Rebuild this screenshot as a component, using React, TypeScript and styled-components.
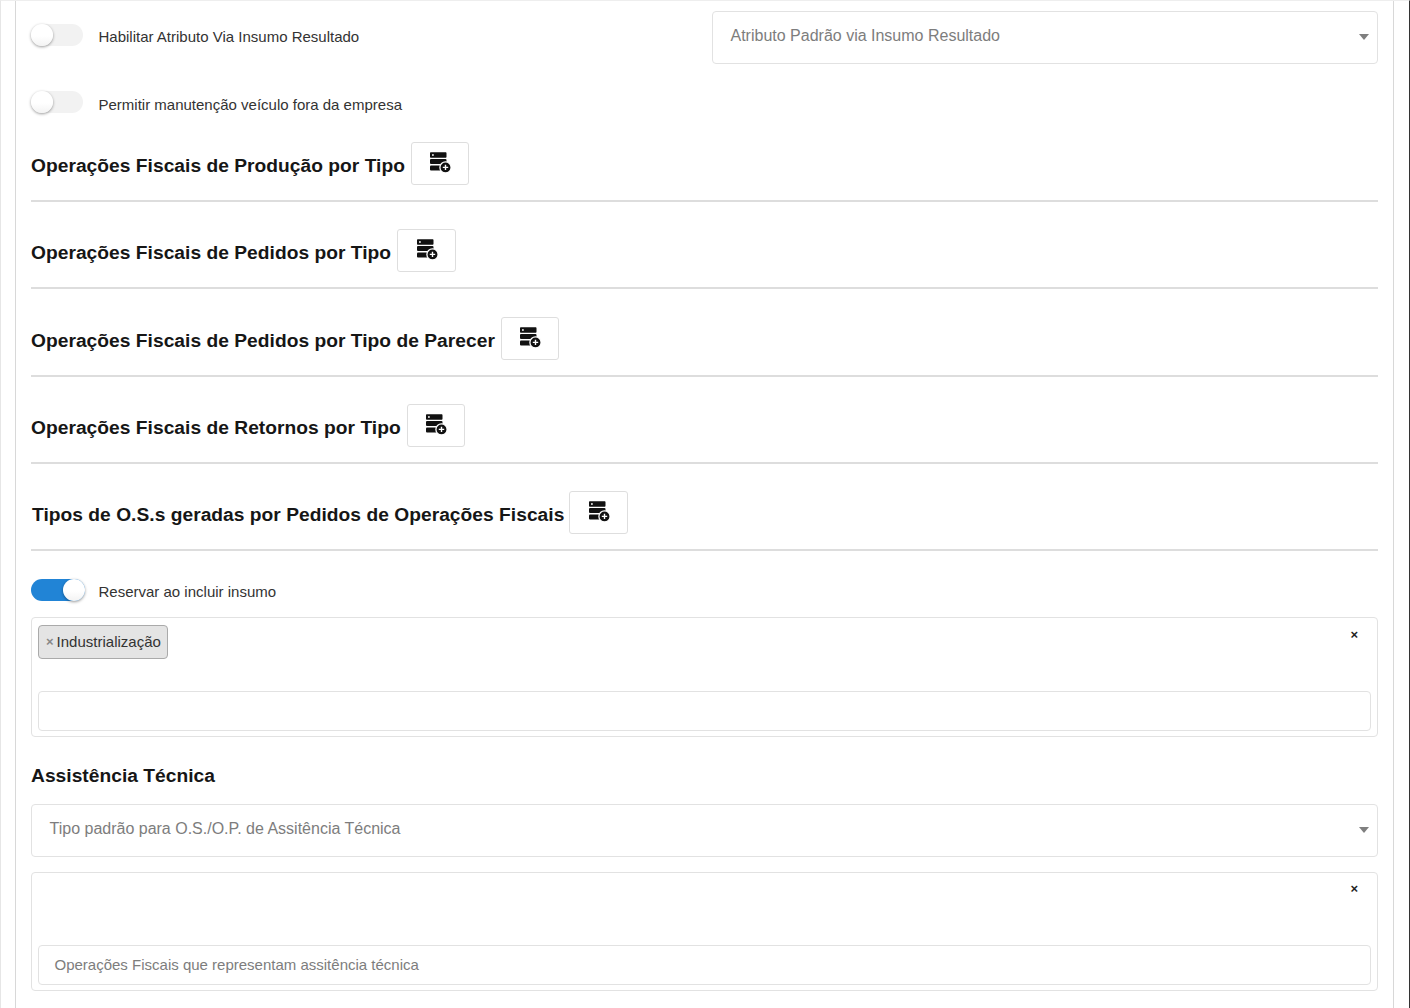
import React from "react";
import styled, { createGlobalStyle } from "styled-components";

const Global = createGlobalStyle`
  html, body { margin: 0; padding: 0; background: #fff; overflow: hidden; }
  body { font-family: "Liberation Sans", Arial, sans-serif; color: #212529; }
`;

const Viewport = styled.div`
  width: 1410px;
  height: 1008px;
  box-sizing: border-box;
  overflow: hidden;
  border-top: 1px solid #eeeeee;
  border-left: 1px solid #e6e6e6;
  border-right: 1px solid #333;
  padding: 0 15px 0 14px;
`;

const Card = styled.div`
  height: 100%;
  box-sizing: border-box;
  border-left: 1px solid #d8d8d8;
  border-right: 1px solid #d8d8d8;
  padding: 10px 15px 0 15px;
`;

const TopRow = styled.div`
  display: grid;
  grid-template-columns: 681px 1fr;
  align-items: start;
`;

const ToggleRow = styled.div<{ $top: number }>`
  display: flex;
  align-items: flex-start;
  height: 26px;
  margin-top: ${(p) => p.$top}px;
`;

const Track = styled.span<{ $on?: boolean }>`
  position: relative;
  display: block;
  flex: none;
  width: ${(p) => (p.$on ? 54 : 52)}px;
  height: 22px;
  border-radius: 11px;
  background: ${(p) => (p.$on ? "#2184d6" : "#f2f2f2")};
`;

const Knob = styled.span<{ $on?: boolean }>`
  position: absolute;
  top: 0;
  ${(p) => (p.$on ? "right: 0;" : "left: 0;")}
  width: 22px;
  height: 22px;
  border-radius: 50%;
  background: linear-gradient(#fff 55%, #f3f3f3);
  box-shadow: 0 1px 3px rgba(0, 0, 0, 0.4);
`;

const ToggleLabel = styled.span<{ $gap: number; $drop?: number }>`
  margin-left: ${(p) => p.$gap}px;
  padding-top: ${(p) => p.$drop ?? 0}px;
  font-size: 15px;
  line-height: 26px;
  color: #333;
  white-space: nowrap;
`;

const SelectBox = styled.div`
  position: relative;
  box-sizing: border-box;
  height: 53px;
  border: 1px solid #e2e2e2;
  border-radius: 4px;
  padding: 14px 17.5px 0;
  font-size: 16px;
  line-height: 20px;
  color: #7d7d7d;
`;

const Caret = styled.span`
  position: absolute;
  right: 8px;
  top: 22px;
  width: 0;
  height: 0;
  border-left: 5px solid transparent;
  border-right: 5px solid transparent;
  border-top: 6px solid #7f7f7f;
`;

const HeadingRow = styled.div<{ $top: number; $gap?: number }>`
  display: flex;
  align-items: center;
  gap: ${(p) => p.$gap ?? 6}px;
  height: 43px;
  margin-top: ${(p) => p.$top}px;
`;

const Heading = styled.h3<{ $inset?: boolean }>`
  margin: 0;
  padding: 5px 0 0 ${(p) => (p.$inset ? 1 : 0)}px;
  font-size: 19.2px;
  line-height: 24px;
  font-weight: 700;
  letter-spacing: 0.03px;
  color: #161616;
  white-space: nowrap;
`;

const IconButton = styled.button<{ $wide?: boolean }>`
  display: flex;
  align-items: flex-start;
  justify-content: center;
  box-sizing: border-box;
  width: ${(p) => (p.$wide ? 59 : 58)}px;
  height: 43px;
  padding: 9px 0 0;
  border: 1px solid #dedede;
  border-radius: 3px;
  background: #fff;
`;

const Divider = styled.hr`
  height: 2px;
  border: 0;
  background: #dddddd;
  margin: 15px 0 0;
`;

const SectionTitle = styled.h3`
  margin: 27px 0 0;
  font-size: 19.2px;
  line-height: 24px;
  font-weight: 700;
  letter-spacing: 0.03px;
  color: #161616;
`;

const MultiBox = styled.div<{ $top: number; $height: number }>`
  position: relative;
  box-sizing: border-box;
  height: ${(p) => p.$height}px;
  margin-top: ${(p) => p.$top}px;
  border: 1px solid #e2e2e2;
  border-radius: 4px;
  padding: 7px 6px 0;
`;

const ChipArea = styled.div<{ $height: number }>`
  height: ${(p) => p.$height}px;
`;

const Chip = styled.span`
  display: inline-flex;
  align-items: center;
  box-sizing: border-box;
  height: 34px;
  padding: 0 6px 2px 7px;
  border: 1px solid #aaa;
  border-radius: 4px;
  background: #e4e4e4;
  font-size: 15px;
  color: #333;
`;

const ChipX = styled.span`
  margin-right: 3px;
  color: #888;
  font-size: 13px;
  font-weight: 700;
`;

const Clear = styled.span<{ $top: number }>`
  position: absolute;
  top: ${(p) => p.$top}px;
  right: 19px;
  font-size: 13px;
  line-height: 16px;
  font-weight: 700;
  color: #222;
`;

const SearchInput = styled.div`
  box-sizing: border-box;
  height: 40px;
  border: 1px solid #e2e2e2;
  border-radius: 4px;
  padding: 0 15.5px;
  font-size: 15px;
  line-height: 38px;
  color: #7d7d7d;
`;

const WideSelect = styled(SelectBox)`
  margin-top: 16px;
`;

const DbPlus = () => (
  <svg width="22" height="22" viewBox="0 0 22 22" aria-hidden="true">
    <path fill="#111" fillRule="evenodd" d="M2 .3h14.500c.6 0 1 .4 1 1v3.400c0 .6-.4 1-1 1H2c-.6 0-1-.4-1-1V1.300c0-.6.4-1 1-1zM3 2.200v1.600h1.800V2.200H3z" />
    <rect x="1" y="7" width="16.500" height="5" rx="1" fill="#111" />
    <rect x="1" y="13.500" width="16.500" height="5" rx="1" fill="#111" />
    <circle cx="16.500" cy="15.400" r="5.600" fill="#111" stroke="#fff" strokeWidth="1.300" />
    <path fill="#fff" d="M15.800 12.700h1.400v2h2v1.400h-2v2h-1.400v-2h-2v-1.400h2z" />
  </svg>
);

const Toggle = ({ on, label, gap, drop }: { on?: boolean; label: string; gap: number; drop?: number }) => (
  <>
    <Track $on={on}><Knob $on={on} /></Track>
    <ToggleLabel $gap={gap} $drop={drop}>{label}</ToggleLabel>
  </>
);

const sections = [
  { title: "Operações Fiscais de Pedidos por Tipo", top: 27, wide: true },
  { title: "Operações Fiscais de Pedidos por Tipo de Parecer", top: 28 },
  { title: "Operações Fiscais de Retornos por Tipo", top: 27 },
  { title: "Tipos de O.S.s geradas por Pedidos de Operações Fiscais", top: 27, inset: true, gap: 5, wide: true },
];

export default function App() {
  return (
    <Viewport>
      <Global />
      <Card>
        <TopRow>
          <ToggleRow $top={13}>
            <Toggle label="Habilitar Atributo Via Insumo Resultado" gap={15.5} />
          </ToggleRow>
          <SelectBox>Atributo Padrão via Insumo Resultado<Caret /></SelectBox>
        </TopRow>
        <ToggleRow $top={27}>
          <Toggle label="Permitir manutenção veículo fora da empresa" gap={15.5} drop={1} />
        </ToggleRow>
        <HeadingRow $top={25}>
          <Heading>Operações Fiscais de Produção por Tipo</Heading>
          <IconButton><DbPlus /></IconButton>
        </HeadingRow>
        <Divider />
        {sections.map((s) => (
          <React.Fragment key={s.title}>
            <HeadingRow $top={s.top} $gap={s.gap}>
              <Heading $inset={s.inset}>{s.title}</Heading>
              <IconButton $wide={s.wide}><DbPlus /></IconButton>
            </HeadingRow>
            <Divider />
          </React.Fragment>
        ))}
        <ToggleRow $top={28}>
          <Toggle on label="Reservar ao incluir insumo" gap={13.5} />
        </ToggleRow>
        <MultiBox $top={12} $height={120}>
          <ChipArea $height={66}>
            <Chip><ChipX>×</ChipX>Industrialização</Chip>
          </ChipArea>
          <SearchInput />
          <Clear $top={9}>×</Clear>
        </MultiBox>
        <SectionTitle>Assistência Técnica</SectionTitle>
        <WideSelect>Tipo padrão para O.S./O.P. de Assitência Técnica<Caret /></WideSelect>
        <MultiBox $top={15} $height={119}>
          <ChipArea $height={65} />
          <SearchInput>Operações Fiscais que representam assitência técnica</SearchInput>
          <Clear $top={8}>×</Clear>
        </MultiBox>
      </Card>
    </Viewport>
  );
}
